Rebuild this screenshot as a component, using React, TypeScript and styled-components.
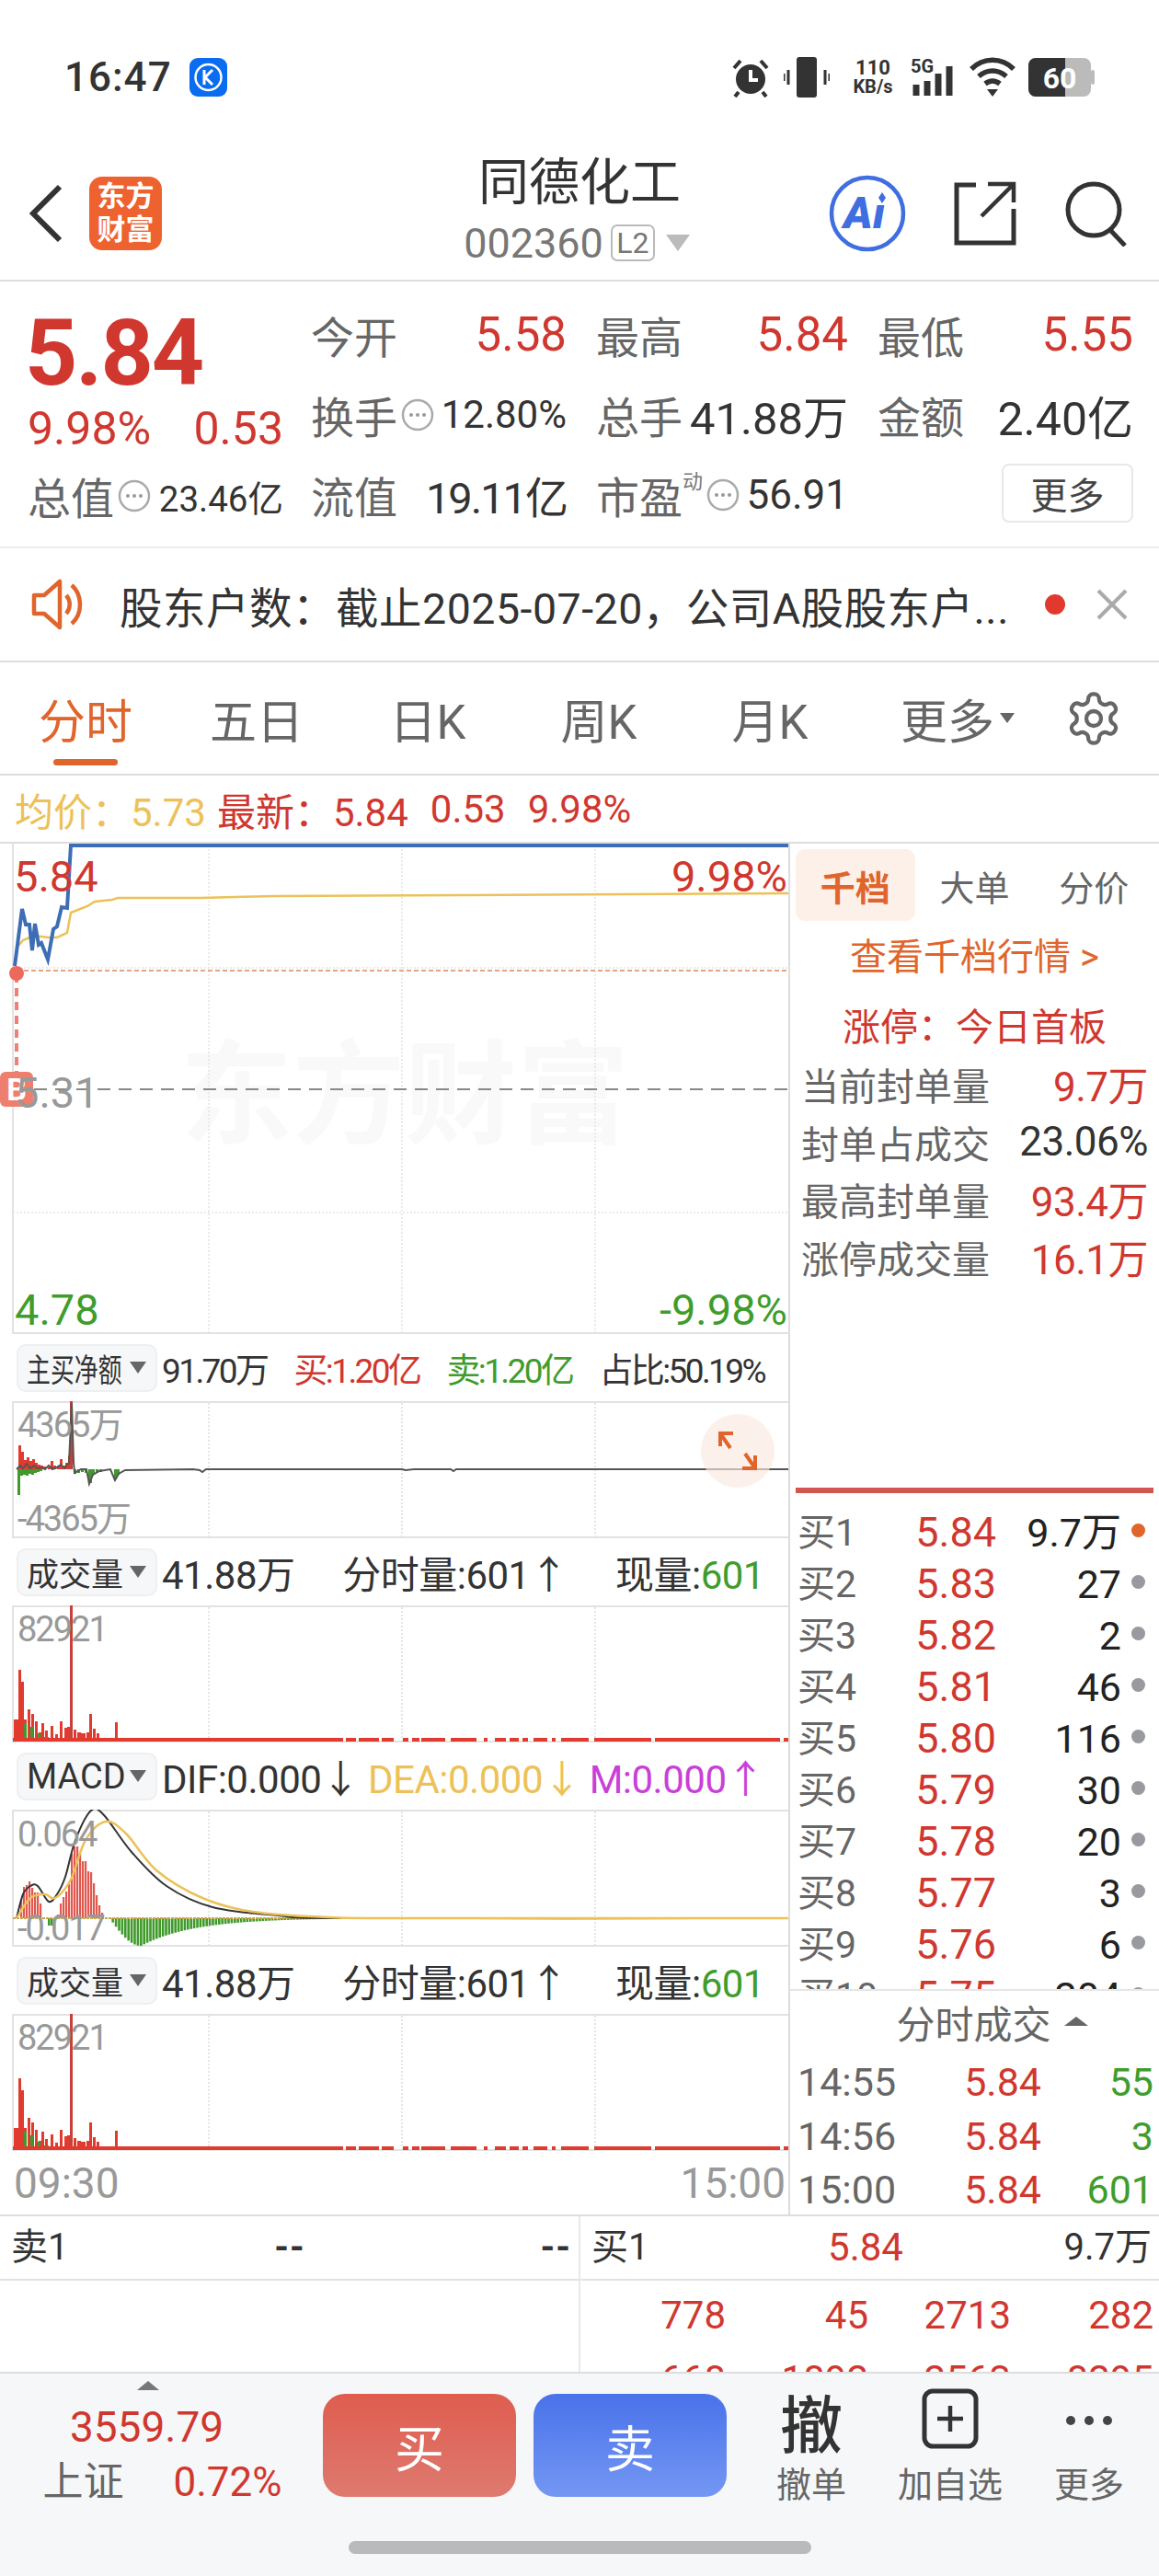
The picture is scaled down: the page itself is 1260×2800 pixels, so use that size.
import * as React from 'react';
import styled, { createGlobalStyle } from 'styled-components';

const RED = '#d0372f';
const GREEN = '#409c2c';
const YELLOW = '#ecc158';
const ORANGE = '#e0652c';
const LINE = '#e2e2e2';

const GlobalStyle = createGlobalStyle`
  html, body {
    margin: 0;
    padding: 0;
    background: #fff;
  }
  body {
    font-family: Roboto, "Noto Sans CJK SC", sans-serif;
    color: #333;
  }
`;

const Page = styled.div`
  width: 1260px;
  height: 2800px;
  overflow: hidden;
  display: flex;
  flex-direction: column;
  background: #fff;
`;

const StatusBar = styled.div`
  height: 160px;
  flex: none;
  display: flex;
  align-items: center;
  padding: 8px 70px 0 70px;
  box-sizing: border-box;
`;

const Clock = styled.span`
  font-size: 44px;
  font-weight: 500;
  color: #333;
  letter-spacing: 1px;
`;

const StatusIcons = styled.div`
  margin-left: auto;
  display: flex;
  align-items: center;
  gap: 14px;
`;

const NetSpeed = styled.div`
  display: flex;
  flex-direction: column;
  align-items: center;
  font-size: 20px;
  line-height: 21px;
  font-weight: 700;
  color: #333;
  width: 54px;
`;

const Header = styled.div`
  height: 146px;
  flex: none;
  display: grid;
  grid-template-columns: 1fr 400px 1fr;
  align-items: center;
  border-bottom: 2px solid #ddd;
  box-sizing: border-box;
`;

const HeaderLeft = styled.div`
  display: flex;
  align-items: center;
  padding-left: 32px;
  gap: 29px;
`;

const Logo = styled.div`
  width: 79px;
  height: 80px;
  border-radius: 14px;
  background: #ee6230;
  color: #fff;
  font-size: 31px;
  line-height: 36px;
  font-weight: 700;
  text-align: center;
  display: flex;
  align-items: center;
  justify-content: center;
`;

const HeaderCenter = styled.div`
  display: flex;
  flex-direction: column;
  align-items: center;
  padding-bottom: 15px;
`;

const Title = styled.div`
  font-size: 55px;
  line-height: 72px;
  color: #333;
`;

const CodeRow = styled.div`
  display: flex;
  align-items: center;
  height: 46px;
  margin-top: 7px;
  color: #777;
  font-size: 45px;
  margin-left: -6px;
`;

const L2Badge = styled.span`
  margin-left: 8px;
  width: 48px;
  height: 40px;
  border: 2px solid #bbb;
  border-radius: 7px;
  box-sizing: border-box;
  font-size: 32px;
  display: flex;
  align-items: center;
  justify-content: center;
  color: #777;
`;

const DownTriangle = styled.span<{ $size: number; $color: string }>`
  display: inline-block;
  border-left: ${p => p.$size}px solid transparent;
  border-right: ${p => p.$size}px solid transparent;
  border-top: ${p => Math.round(p.$size * 1.4)}px solid ${p => p.$color};
`;

const HeaderRight = styled.div`
  display: flex;
  align-items: center;
  justify-content: flex-end;
  gap: 52px;
  padding-right: 33px;
`;

const Quote = styled.div`
  height: 290px;
  flex: none;
  display: flex;
  padding: 14px 28px 0 30px;
  border-bottom: 2px solid #eee;
  box-sizing: border-box;
`;

const QuoteLeft = styled.div`
  width: 278px;
  margin-right: 30px;
  flex: none;
  display: flex;
  flex-direction: column;
`;

const BigPrice = styled.div`
  height: 116px;
  margin: 5px 0 -4px -3px;
  display: flex;
  align-items: center;
  font-size: 100px;
  font-weight: 700;
  color: ${RED};
  letter-spacing: -2px;
`;

const ChangeRow = styled.div`
  height: 58px;
  display: flex;
  align-items: center;
  justify-content: space-between;
  font-size: 50px;
  color: ${RED};
`;

const StatGrid = styled.div`
  flex: 1;
  display: grid;
  grid-template-columns: 278px 274px 278px;
  grid-auto-rows: 87px;
  column-gap: 32px;
`;

const Stat = styled.div`
  display: flex;
  align-items: center;
  height: 87px;
`;

const StatLabel = styled.span`
  font-size: 47px;
  color: #666;
  white-space: nowrap;
`;

const StatValue = styled.span<{ $color?: string; $size?: number; $spacing?: number }>`
  margin-left: auto;
  font-size: ${p => p.$size || 50}px;
  letter-spacing: ${p => p.$spacing || 0}px;
  color: ${p => p.$color || '#333'};
  white-space: nowrap;
`;

const Sup = styled.sup`
  font-size: 22px;
  line-height: 0;
  color: #777;
  position: relative;
  top: -14px;
  vertical-align: top;
`;

const MoreButton = styled.div`
  margin-left: auto;
  width: 143px;
  height: 64px;
  margin-top: -3px;
  border: 2px solid #e8e8e8;
  border-radius: 8px;
  box-sizing: border-box;
  font-size: 40px;
  color: #444;
  display: flex;
  align-items: center;
  justify-content: center;
`;

const Notice = styled.div`
  height: 124px;
  flex: none;
  display: flex;
  align-items: center;
  padding: 0 34px;
  border-bottom: 2px solid #ddd;
  box-sizing: border-box;
`;

const NoticeText = styled.div`
  margin-left: 36px;
  width: 990px;
  font-size: 46.5px;
  letter-spacing: 0.5px;
  color: #333;
  white-space: nowrap;
  overflow: hidden;
`;

const RedDot = styled.span`
  margin-left: 26px;
  width: 22px;
  height: 22px;
  border-radius: 50%;
  background: #e2392f;
  flex: none;
`;

const Tabs = styled.div`
  height: 123px;
  flex: none;
  display: flex;
  align-items: center;
  border-bottom: 2px solid #ddd;
  box-sizing: border-box;
  position: relative;
`;

const Tab = styled.div<{ $width: number; $active?: boolean }>`
  width: ${p => p.$width}px;
  height: 100%;
  flex: none;
  display: flex;
  align-items: center;
  justify-content: center;
  gap: 6px;
  font-size: 51px;
  color: ${p => (p.$active ? ORANGE : '#666')};
  position: relative;
  ${p =>
    p.$active
      ? `&::after {
    content: '';
    position: absolute;
    left: 58px;
    bottom: 9px;
    width: 70px;
    height: 7px;
    border-radius: 4px;
    background: ${ORANGE};
  }`
      : ''}
`;

const Body = styled.div`
  display: flex;
  height: 1492px;
  flex: none;
  border-bottom: 2px solid #ddd;
  box-sizing: border-box;
`;

const LeftCol = styled.div`
  width: 857px;
  flex: none;
  display: flex;
  flex-direction: column;
`;

const RightCol = styled.div`
  width: 403px;
  flex: none;
  display: flex;
  flex-direction: column;
  border-left: 2px solid #ddd;
  box-sizing: border-box;
`;

const InfoLine = styled.div`
  width: 1260px;
  height: 74px;
  flex: none;
  display: flex;
  align-items: center;
  gap: 24px;
  padding-left: 16px;
  font-size: 42px;
  color: ${RED};
  border-bottom: 2px solid #ddd;
  box-sizing: border-box;
`;

const Chunk = styled.span<{ $color?: string }>`
  color: ${p => p.$color || 'inherit'};
  white-space: nowrap;
`;

const ChartBox = styled.div<{ $height: number }>`
  position: relative;
  height: ${p => p.$height}px;
  flex: none;
  overflow: hidden;
  > svg {
    display: block;
    position: absolute;
    left: 0;
    top: 0;
  }
`;

const AxisLabel = styled.span<{ $y: number; $x?: number; $right?: number; $color?: string; $small?: boolean }>`
  position: absolute;
  top: ${p => p.$y}px;
  ${p => (p.$right !== undefined ? `right: ${p.$right}px;` : `left: ${p.$x}px;`)}
  transform: translateY(-50%);
  font-size: ${p => (p.$small ? 38 : 47)}px;
  letter-spacing: ${p => (p.$small ? '-2px' : '0')};
  line-height: 1;
  color: ${p => p.$color || '#999'};
  white-space: nowrap;
  z-index: 1;
`;

const Watermark = styled.span`
  position: absolute;
  left: 196px;
  top: 183px;
  font-size: 122px;
  line-height: 1.5;
  font-weight: 700;
  color: #f9f9f9;
  white-space: nowrap;
`;

const BuyBadge = styled.span`
  position: absolute;
  left: 0;
  top: 248px;
  width: 36px;
  height: 38px;
  border-radius: 6px;
  background: #ee7f6e;
  color: #fff;
  font-size: 34px;
  font-weight: 700;
  line-height: 38px;
  text-align: center;
`;

const SubHeader = styled.div`
  height: 73px;
  flex: none;
  display: flex;
  align-items: center;
  padding: 0 26px 0 18px;
  box-sizing: border-box;
`;

const Select = styled.div<{ $size: number }>`
  width: 153px;
  height: 52px;
  flex: none;
  display: flex;
  align-items: center;
  justify-content: space-between;
  padding: 0 10px 0 9px;
  margin-right: 5px;
  box-sizing: border-box;
  background: #f6f7f9;
  border: 2px solid #eeeff1;
  border-radius: 10px;
  font-size: ${p => p.$size}px;
  color: #333;
  white-space: nowrap;
`;

const NarrowLabel = styled.span`
  display: inline-block;
  width: 104px;
  transform: scaleX(0.74);
  transform-origin: left center;
`;

const SubValues = styled.div<{ $tight?: boolean }>`
  flex: 1;
  display: flex;
  justify-content: space-between;
  font-size: ${p => (p.$tight ? 37 : 42)}px;
  letter-spacing: ${p => (p.$tight ? '-2.6px' : '-0.5px')};
  color: #333;
  white-space: nowrap;
`;

const ExpandBubble = styled.div`
  position: absolute;
  left: 762px;
  top: 14px;
  width: 80px;
  height: 80px;
  border-radius: 50%;
  background: rgba(250, 232, 222, 0.65);
  display: flex;
  align-items: center;
  justify-content: center;
`;

const TimeAxis = styled.div`
  height: 70px;
  flex: none;
  display: flex;
  align-items: center;
  justify-content: space-between;
  padding: 0 3px 0 15px;
  font-size: 46px;
  color: #999;
  box-sizing: border-box;
`;

const DepthTop = styled.div`
  height: 706px;
  flex: none;
  padding: 6px 6px 0 6px;
  box-sizing: border-box;
  display: flex;
  flex-direction: column;
`;

const DepthTabs = styled.div`
  display: flex;
  height: 78px;
  flex: none;
`;

const DepthTab = styled.div<{ $active?: boolean }>`
  width: 130px;
  display: flex;
  align-items: center;
  justify-content: center;
  font-size: 38px;
  border-radius: 10px;
  color: ${p => (p.$active ? ORANGE : '#666')};
  font-weight: ${p => (p.$active ? 700 : 400)};
  background: ${p => (p.$active ? '#fdf0e8' : 'transparent')};
`;

const DepthLink = styled.div`
  height: 72px;
  display: flex;
  align-items: center;
  justify-content: center;
  font-size: 40px;
  color: ${ORANGE};
  flex: none;
`;

const LimitTitle = styled.div`
  height: 68px;
  margin-top: 6px;
  display: flex;
  align-items: center;
  justify-content: center;
  font-size: 41px;
  color: ${RED};
  flex: none;
`;

const SealRow = styled.div`
  height: 62.5px;
  flex: none;
  display: flex;
  align-items: center;
  justify-content: space-between;
  padding: 0 6px 0 6px;
  font-size: 41px;
  white-space: nowrap;
  color: #666;
`;

const SealValue = styled.span<{ $color: string }>`
  color: ${p => p.$color};
  font-size: 44px;
  letter-spacing: -0.5px;
`;

const RedRule = styled.div`
  height: 6px;
  flex: none;
  margin: 220px 0 0 0;
  background: #d2564f;
`;

const BookList = styled.div`
  flex: 1;
  overflow: hidden;
  padding-top: 15px;
  min-height: 0;
`;

const BookRow = styled.div`
  height: 56px;
  line-height: 56px;
  display: grid;
  grid-template-columns: 80px 136px 136px 1fr;
  align-items: center;
  padding-left: 8px;
  white-space: nowrap;
  font-size: 45px;
`;

const BookLabel = styled.span`
  color: #666;
  font-size: 41px;
`;

const BookPrice = styled.span`
  color: ${RED};
  text-align: right;
`;

const BookVol = styled.span`
  color: #222;
  font-size: 43px;
  text-align: right;
`;

const BookDot = styled.span<{ $color: string }>`
  justify-self: center;
  width: 15px;
  height: 15px;
  border-radius: 50%;
  background: ${p => p.$color};
  margin-left: -4px;
  margin-top: -5px;
`;

const TradesPanel = styled.div`
  height: 245px;
  flex: none;
  border-top: 2px solid #e6e6e6;
  box-sizing: border-box;
  background: #fff;
`;

const TradesTitle = styled.div`
  height: 66px;
  margin-bottom: 4px;
  display: flex;
  align-items: center;
  justify-content: center;
  gap: 14px;
  padding-left: 38px;
  font-size: 42px;
  color: #666;
`;

const UpTriangle = styled.span<{ $size: number; $color: string; $shift?: number }>`
  display: inline-block;
  margin-right: ${p => p.$shift || 0}px;
  border-left: ${p => p.$size}px solid transparent;
  border-right: ${p => p.$size}px solid transparent;
  border-bottom: ${p => Math.round(p.$size * 0.8)}px solid ${p => p.$color};
`;

const TradeRow = styled.div`
  height: 58.5px;
  display: grid;
  grid-template-columns: 128px 137px 1fr;
  align-items: center;
  padding: 0 6px 0 8px;
  font-size: 43px;
`;

const TradeTime = styled.span`
  color: #666;
`;

const TradeNum = styled.span<{ $color: string }>`
  color: ${p => p.$color};
  text-align: right;
`;

const Ledger = styled.div`
  flex: 1;
  min-height: 0;
  overflow: hidden;
  display: flex;
`;

const LedgerSide = styled.div<{ $right?: boolean }>`
  width: ${p => (p.$right ? 629 : 631)}px;
  flex: none;
  box-sizing: border-box;
  border-right: ${p => (p.$right ? '0' : '2px solid #e8e8e8')};
`;

const LedgerHead = styled.div`
  height: 70px;
  line-height: 70px;
  display: flex;
  align-items: center;
  justify-content: space-between;
  padding: 0 8px 0 12px;
  font-size: 40px;
  color: #333;
  border-bottom: 2px solid #e2e2e2;
  box-sizing: border-box;
`;

const LedgerPrice = styled.span`
  color: ${RED};
  font-size: 42px;
  margin-left: 20px;
`;

const LedgerDash = styled.span<{ $middle?: boolean }>`
  font-size: 40px;
  font-weight: 700;
  letter-spacing: 1px;
  margin-right: ${p => (p.$middle ? 32 : 0)}px;
`;

const LedgerGrid = styled.div`
  display: grid;
  grid-template-columns: 158px 155px 155px 155px;
  grid-auto-rows: 70px;
  align-items: center;
  font-size: 42px;
  color: ${RED};
  text-align: right;
  padding-top: 2px;
`;

const BottomBar = styled.div`
  height: 222px;
  flex: none;
  display: flex;
  flex-direction: column;
  background: #f6f7f9;
  border-top: 2px solid #ddd;
  box-sizing: border-box;
  position: relative;
`;

const BottomMain = styled.div`
  display: flex;
  height: 150px;
  flex: none;
`;

const IndexBlock = styled.div`
  width: 351px;
  flex: none;
  display: flex;
  flex-direction: column;
  align-items: center;
  padding-top: 8px;
  box-sizing: border-box;
`;

const IndexValue = styled.div`
  font-size: 46px;
  line-height: 64px;
  margin: 8px 32px 0 0;
  color: ${RED};
`;

const IndexLine = styled.div`
  width: 260px;
  display: flex;
  justify-content: space-between;
  align-items: center;
  font-size: 44px;
  line-height: 56px;
  margin-left: 2px;
  color: ${RED};
`;

const TradeButton = styled.div<{ $from: string; $to: string }>`
  width: 210px;
  height: 112px;
  margin: 22px 19px 0 0;
  flex: none;
  border-radius: 24px;
  background: linear-gradient(${p => p.$from}, ${p => p.$to});
  color: #fff;
  font-size: 54px;
  display: flex;
  align-items: center;
  justify-content: center;
`;

const Action = styled.div<{ $width: number }>`
  width: ${p => p.$width}px;
  flex: none;
  display: flex;
  flex-direction: column;
  align-items: center;
  font-size: 38px;
  color: #666;
`;

const ActionIcon = styled.div`
  height: 94px;
  display: flex;
  align-items: center;
  justify-content: center;
  font-size: 68px;
  font-weight: 500;
  color: #333;
  margin-top: 4px;
`;

const ActionLabel = styled.div`
  line-height: 46px;
`;

const HomeBar = styled.div`
  width: 503px;
  height: 14px;
  margin: 32px auto 0;
  border-radius: 7px;
  background: #b9babc;
`;

const InfoDot = () => (
  <svg width="36" height="36" viewBox="0 0 36 36" style={{ marginLeft: 4, flex: 'none' }}>
    <circle cx="18" cy="18" r="16" fill="none" stroke="#aaa" strokeWidth="2.5" />
    <circle cx="11" cy="18" r="2" fill="#999" />
    <circle cx="18" cy="18" r="2" fill="#999" />
    <circle cx="25" cy="18" r="2" fill="#999" />
  </svg>
);

const Frame = ({ height }: { height: number }) => (
  <g>
    <rect x="14" y="1" width="845" height={height - 2} fill="none" stroke={LINE} strokeWidth="2" />
    {[227, 437, 647].map(x => (
      <line key={x} x1={x} x2={x} y1="2" y2={height - 2} stroke="#ddd" strokeWidth="1.5" strokeDasharray="2 2" />
    ))}
  </g>
);

const bars = (list: number[][], base: number, color: string, down = false) =>
  list.map(([x, w, h], i) => (
    <rect key={i} x={x} y={down ? base : base - h} width={w} height={h} fill={color} />
  ));

const smooth = (pts: number[][]) => {
  let d = `M${pts[0][0]} ${pts[0][1]}`;
  for (let i = 0; i < pts.length - 1; i++) {
    const p0 = pts[i - 1] || pts[i];
    const p1 = pts[i];
    const p2 = pts[i + 1];
    const p3 = pts[i + 2] || p2;
    const c1x = p1[0] + (p2[0] - p0[0]) / 6;
    const c1y = p1[1] + (p2[1] - p0[1]) / 6;
    const c2x = p2[0] - (p3[0] - p1[0]) / 6;
    const c2y = p2[1] - (p3[1] - p1[1]) / 6;
    d += ` C${c1x} ${c1y} ${c2x} ${c2y} ${p2[0]} ${p2[1]}`;
  }
  return d;
};

const PRICE_LINE =
  '16,133 24,71 28,88 32,88 35,116 38,87 42,110 45,108 52,126 58,93 62,90 67,69 73,70 77,2 857,2';
const AVG_LINE =
  '20,111 25,105 37,100 53,102 62,102 73,97 77,75 95,68 103,63 122,61 128,59 217,59 300,57 500,56 857,54';

const MainChart = () => (
  <svg width="857" height="533" viewBox="0 0 857 533">
    <line x1="14" x2="14" y1="0" y2="533" stroke={LINE} strokeWidth="2" />
    <line x1="14" x2="857" y1="532" y2="532" stroke={LINE} strokeWidth="2" />
    {[227, 437, 647].map(x => (
      <line key={x} x1={x} x2={x} y1="2" y2="531" stroke="#e4e4e4" strokeWidth="1.5" strokeDasharray="2 2" />
    ))}
    <line x1="14" x2="857" y1="401" y2="401" stroke="#e4e4e4" strokeWidth="1.5" strokeDasharray="2 2" />
    <line x1="18" x2="857" y1="135" y2="135" stroke="#e4e4e4" strokeWidth="1.5" strokeDasharray="2 2" />
    <line x1="18" x2="857" y1="138" y2="138" stroke="#e6a582" strokeWidth="2" strokeDasharray="5 3" />
    <line x1="14" x2="857" y1="267" y2="267" stroke="#888" strokeWidth="2" strokeDasharray="14 9" />
    <line x1="18" x2="18" y1="142" y2="250" stroke="#ee8078" strokeWidth="4" strokeDasharray="9 6" />
    <polyline points={AVG_LINE} fill="none" stroke={YELLOW} strokeWidth="2.5" />
    <polyline points={PRICE_LINE} fill="none" stroke="#3d6db5" strokeWidth="4" />
    <circle cx="18" cy="141" r="8" fill="#ec6a5c" />
  </svg>
);

const FLOW_RED = [
  [20, 3, 26], [23, 3, 19], [26, 3, 10], [29, 3, 13], [32, 3, 9], [35, 3, 11], [38, 3, 7], [41, 3, 5],
  [44, 3, 4], [47, 3, 3], [52, 3, 2], [55, 3, 9], [58, 3, 4], [62, 3, 4], [65, 3, 11], [68, 3, 4],
  [71, 3, 7], [74, 3, 15], [76, 3, 74],
];
const FLOW_GREEN = [
  [19, 3, 28], [22, 3, 7], [25, 3, 6], [28, 3, 7], [31, 3, 5], [34, 3, 6], [37, 3, 4], [40, 3, 3],
  [43, 3, 2], [80, 3, 5], [84, 3, 4], [88, 3, 3], [92, 3, 4], [96, 4, 15], [100, 3, 6], [104, 3, 4],
  [108, 3, 3], [124, 3, 11], [127, 3, 6],
];

const FlowChart = () => (
  <svg width="857" height="149" viewBox="0 0 857 149">
    <Frame height={149} />
    {bars(FLOW_RED, 74, '#e13a2e')}
    {bars(FLOW_GREEN, 74, '#3f9a2b', true)}
    <rect x="76" y="0" width="3" height="74" fill="#c8403a" />
    <polyline
      points="18,74 22,70 25,73 29,68 33,73 37,70 41,73 45,72 49,74 53,70 57,74 62,72 66,69 70,73 75,67 78,2 80,66 81,78 88,74 94,74 97,90 101,80 108,76 120,74 125,86 129,79 136,75 210,74 217,75 220,77 224,74 437,74 441,75 450,74 490,74 493,76 496,74 857,74"
      fill="none"
      stroke="#555"
      strokeWidth="2"
    />
  </svg>
);

const VOL_RED = [
  [15, 6, 24], [20, 3, 78], [23, 3, 65], [26, 3, 24], [30, 3, 35], [34, 3, 30], [38, 3, 22], [42, 3, 10],
  [45, 3, 20], [49, 3, 12], [55, 3, 17], [60, 3, 8], [65, 3, 22], [70, 3, 15], [73, 3, 16], [76, 3, 147],
  [80, 3, 13], [84, 4, 10], [88, 5, 9], [94, 3, 10], [97, 3, 30], [101, 3, 14], [105, 3, 9], [125, 3, 21],
];
const VOL_GREEN = [
  [26, 3, 20], [33, 3, 16], [41, 3, 9], [48, 5, 5],
];
const BAND = [
  [14, 373], [376, 387], [390, 412], [415, 428], [438, 444], [448, 456], [458, 484], [490, 518],
  [526, 526], [538, 550], [554, 564], [568, 574], [580, 595], [600, 604], [610, 640], [646, 708], [712, 848],
  [852, 857],
];

const VolumeChart = () => (
  <svg width="857" height="149" viewBox="0 0 857 149">
    <Frame height={149} />
    {bars(VOL_RED, 148, '#e13a2e')}
    {bars(VOL_GREEN, 148, '#3f9a2b')}
    <rect x="76" y="0" width="3" height="148" fill="#c8403a" />
    {BAND.map(([a, b]) => (
      <rect key={a} x={a} y="144" width={Math.max(b - a, 4)} height="4" fill="#e13a2e" />
    ))}
  </svg>
);

const macdRed: number[][] = [];
[
  [22, 20], [25, 34], [28, 36], [31, 40], [34, 33], [37, 28], [40, 28], [43, 16],
  [62, 4], [65, 16], [68, 23], [71, 29], [74, 37], [77, 70], [80, 78], [83, 78], [86, 70], [89, 62],
  [92, 62], [95, 51], [98, 50], [101, 38], [104, 25], [107, 14], [110, 6],
].forEach(([x, h]) => macdRed.push([x, 2.2, h]));

const macdGreen: number[][] = [[52, 2.6, 8], [55, 2.6, 8]];
for (let x = 118; x < 350; x += 3.4) {
  const depth = x < 152 ? 30 * Math.sin(((x - 118) / 34) * (Math.PI / 2)) : 30 * Math.exp(-(x - 152) / 58);
  macdGreen.push([x, 2.6, depth]);
}

const DIF_LINE = [
  [18, 118], [25, 92], [33, 83], [41, 83], [53, 100], [62, 92], [71, 73], [82, 33], [99, 1], [113, 6],
  [143, 46], [181, 83], [231, 106], [302, 115], [385, 118], [857, 118],
];
const DEA_LINE = [
  [18, 118], [33, 96], [49, 92], [60, 96], [77, 76], [93, 33], [115, 13], [137, 26], [170, 66],
  [220, 96], [275, 111], [357, 117], [440, 118], [857, 118],
];

const MacdChart = () => (
  <svg width="857" height="149" viewBox="0 0 857 149">
    <Frame height={149} />
    {bars(macdRed, 118, '#e0584e')}
    {bars(macdGreen, 118, '#3f9a2b', true)}
    <line x1="14" x2="857" y1="118" y2="118" stroke="#c9a94a" strokeWidth="2" strokeDasharray="3 1" />
    <path d={smooth(DIF_LINE)} fill="none" stroke="#333" strokeWidth="2" />
    <path d={smooth(DEA_LINE)} fill="none" stroke={YELLOW} strokeWidth="2.5" />
  </svg>
);

const CaretDown = () => <DownTriangle $size={9} $color="#666" />;

const VolumeHeader = () => (
  <SubHeader>
    <Select $size={35}>
      成交量
      <CaretDown />
    </Select>
    <SubValues>
      <span>41.88万</span>
      <span>分时量:601↑</span>
      <span>
        现量:<Chunk $color={GREEN}>601</Chunk>
      </span>
    </SubValues>
  </SubHeader>
);

const BOOK = [
  ['买1', '5.84', '9.7万', ORANGE],
  ['买2', '5.83', '27'],
  ['买3', '5.82', '2'],
  ['买4', '5.81', '46'],
  ['买5', '5.80', '116'],
  ['买6', '5.79', '30'],
  ['买7', '5.78', '20'],
  ['买8', '5.77', '3'],
  ['买9', '5.76', '6'],
  ['买10', '5.75', '204'],
];

const TRADES = [
  ['14:55', '5.84', '55'],
  ['14:56', '5.84', '3'],
  ['15:00', '5.84', '601'],
];

const SEAL = [
  ['当前封单量', '9.7万', RED],
  ['封单占成交', '23.06%', '#333'],
  ['最高封单量', '93.4万', RED],
  ['涨停成交量', '16.1万', RED],
];

const StatusGlyphs = () => (
  <StatusIcons>
    <svg width="44" height="44" viewBox="0 0 42 44">
      <circle cx="21" cy="24" r="16" fill="#333" />
      <path d="M21 14v11h8" fill="none" stroke="#fff" strokeWidth="4" />
      <path d="M3 12 10 4M39 12 32 4M8 38l-4 5M34 38l4 5" stroke="#333" strokeWidth="4" />
    </svg>
    <svg width="50" height="44" viewBox="0 0 50 44" style={{ marginRight: 6 }}>
      <rect x="14" y="0" width="22" height="44" rx="3" fill="#333" />
      <path d="M5 14v16M0 18v8M45 14v16M50 18v8" stroke="#333" strokeWidth="3" />
    </svg>
    <NetSpeed>
      <span style={{ fontSize: 22 }}>110</span>
      <span>KB/s</span>
    </NetSpeed>
    <svg width="50" height="44" viewBox="0 0 50 44">
      <text x="0" y="17" fontSize="20" fontWeight="700" fill="#333" fontFamily="Roboto">5G</text>
      <path d="M6 30v12M18 26v16M30 18v24M42 10v32" stroke="#333" strokeWidth="7" />
    </svg>
    <svg width="50" height="44" viewBox="0 0 50 44">
      <path d="M2 13C15 0 35 0 48 13M10 21c9-8 21-8 30 0M17 29c5-4 11-4 16 0" fill="none" stroke="#333" strokeWidth="5.5" />
      <path d="M19 35h12l-6 8z" fill="#333" />
    </svg>
    <svg width="72" height="42" viewBox="0 0 72 42">
      <rect x="0" y="0" width="68" height="42" rx="8" fill="#bbb" />
      <path d="M8 0h32v42H8a8 8 0 0 1-8-8V8a8 8 0 0 1 8-8z" fill="#333" />
      <rect x="68" y="13" width="4" height="16" rx="2" fill="#bbb" />
      <text x="34" y="33" textAnchor="middle" fontSize="32" fontWeight="700" fill="#fff" fontFamily="Roboto">60</text>
    </svg>
  </StatusIcons>
);

export default function App() {
  return (
    <Page>
      <GlobalStyle />
      <StatusBar>
        <Clock>16:47</Clock>
        <svg width="41" height="42" viewBox="0 0 41 42" style={{ marginLeft: 19 }}>
          <rect width="41" height="42" rx="9" fill="#0a6cf0" />
          <circle cx="20.5" cy="21" r="14" fill="none" stroke="#fff" strokeWidth="2.5" />
          <path d="M16 13v16M25 13l-8 8 8 8" fill="none" stroke="#fff" strokeWidth="3" />
        </svg>
        <StatusGlyphs />
      </StatusBar>

      <Header>
        <HeaderLeft>
          <svg width="36" height="64" viewBox="0 0 36 64">
            <path d="M33 3 4 32l29 29" fill="none" stroke="#333" strokeWidth="6" />
          </svg>
          <Logo>
            东方
            <br />
            财富
          </Logo>
        </HeaderLeft>
        <HeaderCenter>
          <Title>同德化工</Title>
          <CodeRow>
            002360
            <L2Badge>L2</L2Badge>
            <span style={{ width: 12 }} />
            <DownTriangle $size={13} $color="#bbb" />
          </CodeRow>
        </HeaderCenter>
        <HeaderRight>
          <svg width="84" height="84" viewBox="0 0 84 84">
            <circle cx="42" cy="42" r="39" fill="none" stroke="#3f6ee0" strokeWidth="4.5" />
            <text x="16" y="58" fontSize="48" fontWeight="900" fontStyle="italic" fill="#3f6ee0" fontFamily="Roboto">
              Aı
            </text>
            <path d="M58 19l4 6-4 6-4-6z" fill="#3f6ee0" />
          </svg>
          <svg width="68" height="70" viewBox="0 0 68 70">
            <path d="M24 4H3v63h62V30" fill="none" stroke="#333" strokeWidth="5" />
            <path d="M37 3h28v20M65 3 30 38" fill="none" stroke="#333" strokeWidth="4.5" />
          </svg>
          <svg width="70" height="72" viewBox="0 0 70 72">
            <circle cx="32" cy="32" r="28" fill="none" stroke="#333" strokeWidth="5" />
            <path d="m50 54 16 17" stroke="#333" strokeWidth="5" />
          </svg>
        </HeaderRight>
      </Header>

      <Quote>
        <QuoteLeft>
          <BigPrice>5.84</BigPrice>
          <ChangeRow>
            <span>9.98%</span>
            <span>0.53</span>
          </ChangeRow>
          <Stat>
            <StatLabel>总值</StatLabel>
            <InfoDot />
            <StatValue $size={38.5}>23.46亿</StatValue>
          </Stat>
        </QuoteLeft>
        <StatGrid>
          <Stat>
            <StatLabel>今开</StatLabel>
            <StatValue $color={RED} $size={51}>5.58</StatValue>
          </Stat>
          <Stat>
            <StatLabel>最高</StatLabel>
            <StatValue $color={RED} $size={51}>5.84</StatValue>
          </Stat>
          <Stat>
            <StatLabel>最低</StatLabel>
            <StatValue $color={RED} $size={51}>5.55</StatValue>
          </Stat>
          <Stat>
            <StatLabel>换手</StatLabel>
            <InfoDot />
            <StatValue $size={42}>12.80%</StatValue>
          </Stat>
          <Stat>
            <StatLabel>总手</StatLabel>
            <StatValue $size={49}>41.88万</StatValue>
          </Stat>
          <Stat>
            <StatLabel>金额</StatLabel>
            <StatValue>2.40亿</StatValue>
          </Stat>
          <Stat>
            <StatLabel>流值</StatLabel>
            <StatValue $size={47} $spacing={-2}>19.11亿</StatValue>
          </Stat>
          <Stat>
            <StatLabel>市盈</StatLabel>
            <Sup>动</Sup>
            <InfoDot />
            <StatValue $size={44}>56.91</StatValue>
          </Stat>
          <Stat>
            <MoreButton>更多</MoreButton>
          </Stat>
        </StatGrid>
      </Quote>

      <Notice>
        <svg width="60" height="58" viewBox="0 0 60 58" style={{ flex: 'none' }}>
          <path d="M3 19h11L31 4v50L14 39H3z" fill="none" stroke={ORANGE} strokeWidth="4.5" strokeLinejoin="round" />
          <path d="M38 19c5 6 5 14 0 20M44 8c12 11 12 31 0 42" fill="none" stroke={ORANGE} strokeWidth="4.5" />
        </svg>
        <NoticeText>股东户数：截止2025-07-20，公司A股股东户...</NoticeText>
        <RedDot />
        <svg width="34" height="34" viewBox="0 0 34 34" style={{ marginLeft: 34, flex: 'none' }}>
          <path d="M2 2l30 30M32 2 2 32" stroke="#aaa" strokeWidth="4" />
        </svg>
      </Notice>

      <Tabs>
        <Tab $width={186} $active>
          分时
        </Tab>
        <Tab $width={186}>五日</Tab>
        <Tab $width={186}>日K</Tab>
        <Tab $width={186}>周K</Tab>
        <Tab $width={186}>月K</Tab>
        <Tab $width={222}>
          更多
          <DownTriangle $size={8} $color="#666" />
        </Tab>
        <svg width="64" height="64" viewBox="0 0 24 24" fill="none" stroke="#666" strokeWidth="1.6" style={{ marginLeft: 5 }}>
          <path d="M12.22 2h-.44a2 2 0 0 0-2 2v.18a2 2 0 0 1-1 1.73l-.43.25a2 2 0 0 1-2 0l-.15-.08a2 2 0 0 0-2.73.73l-.22.38a2 2 0 0 0 .73 2.73l.15.1a2 2 0 0 1 1 1.72v.51a2 2 0 0 1-1 1.74l-.15.09a2 2 0 0 0-.73 2.73l.22.38a2 2 0 0 0 2.73.73l.15-.08a2 2 0 0 1 2 0l.43.25a2 2 0 0 1 1 1.73V20a2 2 0 0 0 2 2h.44a2 2 0 0 0 2-2v-.18a2 2 0 0 1 1-1.73l.43-.25a2 2 0 0 1 2 0l.15.08a2 2 0 0 0 2.73-.73l.22-.39a2 2 0 0 0-.73-2.73l-.15-.08a2 2 0 0 1-1-1.74v-.5a2 2 0 0 1 1-1.74l.15-.09a2 2 0 0 0 .73-2.73l-.22-.38a2 2 0 0 0-2.73-.73l-.15.08a2 2 0 0 1-2 0l-.43-.25a2 2 0 0 1-1-1.73V4a2 2 0 0 0-2-2z" />
          <circle cx="12" cy="12" r="3" />
        </svg>
      </Tabs>

      <InfoLine>
        <Chunk $color={YELLOW} style={{ marginRight: -12 }}>
          均价：5.73
        </Chunk>
        <Chunk>最新：5.84</Chunk>
        <Chunk>0.53</Chunk>
        <Chunk>9.98%</Chunk>
      </InfoLine>

      <Body>
        <LeftCol>
          <ChartBox $height={533}>
            <Watermark>东方财富</Watermark>
            <MainChart />
            <BuyBadge>B</BuyBadge>
            <AxisLabel $x={15} $y={35} $color={RED}>5.84</AxisLabel>
            <AxisLabel $right={1} $y={35} $color={RED}>9.98%</AxisLabel>
            <AxisLabel $x={16} $y={270}>5.31</AxisLabel>
            <AxisLabel $x={16} $y={506} $color={GREEN}>4.78</AxisLabel>
            <AxisLabel $right={1} $y={506} $color={GREEN}>-9.98%</AxisLabel>
          </ChartBox>

          <SubHeader>
            <Select $size={35}>
              <NarrowLabel>主买净额</NarrowLabel>
              <CaretDown />
            </Select>
            <SubValues $tight>
              <span>91.70万</span>
              <span style={{ color: RED }}>买:1.20亿</span>
              <span style={{ color: GREEN }}>卖:1.20亿</span>
              <span>占比:50.19%</span>
            </SubValues>
          </SubHeader>
          <ChartBox $height={149}>
            <AxisLabel $x={19} $y={26} $small>4365万</AxisLabel>
            <AxisLabel $x={19} $y={128} $small>-4365万</AxisLabel>
            <FlowChart />
            <ExpandBubble>
              <svg width="44" height="44" viewBox="0 0 44 44">
                <path d="M3 17V3h14M3 3l11 16M41 27v14H27M41 41 30 25" fill="none" stroke={ORANGE} strokeWidth="4" />
              </svg>
            </ExpandBubble>
          </ChartBox>

          <VolumeHeader />
          <ChartBox $height={149}>
            <AxisLabel $x={19} $y={26} $small>82921</AxisLabel>
            <VolumeChart />
          </ChartBox>

          <SubHeader>
            <Select $size={38}>
              MACD
              <CaretDown />
            </Select>
            <SubValues>
              <span>DIF:0.000↓</span>
              <Chunk $color={YELLOW}>DEA:0.000↓</Chunk>
              <Chunk $color="#c93fd9">M:0.000↑</Chunk>
            </SubValues>
          </SubHeader>
          <ChartBox $height={149}>
            <AxisLabel $x={19} $y={27} $small>0.064</AxisLabel>
            <AxisLabel $x={19} $y={129} $small>-0.017</AxisLabel>
            <MacdChart />
          </ChartBox>

          <VolumeHeader />
          <ChartBox $height={149}>
            <AxisLabel $x={19} $y={26} $small>82921</AxisLabel>
            <VolumeChart />
          </ChartBox>

          <TimeAxis>
            <span>09:30</span>
            <span>15:00</span>
          </TimeAxis>
        </LeftCol>

        <RightCol>
          <DepthTop>
            <DepthTabs>
              <DepthTab $active>千档</DepthTab>
              <DepthTab>大单</DepthTab>
              <DepthTab>分价</DepthTab>
            </DepthTabs>
            <DepthLink>查看千档行情 &gt;</DepthLink>
            <LimitTitle>涨停：今日首板</LimitTitle>
            {SEAL.map(([label, value, color]) => (
              <SealRow key={label}>
                {label}
                <SealValue $color={color}>{value}</SealValue>
              </SealRow>
            ))}
            <RedRule />
          </DepthTop>
          <BookList>
            {BOOK.map(([label, price, vol, dot]) => (
              <BookRow key={label}>
                <BookLabel>{label}</BookLabel>
                <BookPrice>{price}</BookPrice>
                <BookVol>{vol}</BookVol>
                <BookDot $color={dot || '#999aa0'} />
              </BookRow>
            ))}
          </BookList>
          <TradesPanel>
            <TradesTitle>
              分时成交
              <UpTriangle $size={13} $color="#666" />
            </TradesTitle>
            {TRADES.map(([time, price, vol]) => (
              <TradeRow key={time}>
                <TradeTime>{time}</TradeTime>
                <TradeNum $color={RED}>{price}</TradeNum>
                <TradeNum $color={GREEN}>{vol}</TradeNum>
              </TradeRow>
            ))}
          </TradesPanel>
        </RightCol>
      </Body>

      <Ledger>
        <LedgerSide>
          <LedgerHead>
            <span>卖1</span>
            <LedgerDash $middle>--</LedgerDash>
            <LedgerDash>--</LedgerDash>
          </LedgerHead>
        </LedgerSide>
        <LedgerSide $right>
          <LedgerHead>
            <span>买1</span>
            <LedgerPrice>5.84</LedgerPrice>
            <span>9.7万</span>
          </LedgerHead>
          <LedgerGrid>
            <span>778</span>
            <span>45</span>
            <span>2713</span>
            <span>282</span>
            <span>668</span>
            <span>1892</span>
            <span>2563</span>
            <span>8295</span>
          </LedgerGrid>
        </LedgerSide>
      </Ledger>

      <BottomBar>
        <BottomMain>
          <IndexBlock>
            <UpTriangle $size={12} $color="#777" $shift={30} />
            <IndexValue>3559.79</IndexValue>
            <IndexLine>
              <Chunk $color="#666">上证</Chunk>
              <span>0.72%</span>
            </IndexLine>
          </IndexBlock>
          <TradeButton $from="#df5d4f" $to="#de7a70">买</TradeButton>
          <TradeButton $from="#4a72ea" $to="#7497f3">卖</TradeButton>
          <Action $width={146}>
            <ActionIcon>撤</ActionIcon>
            <ActionLabel>撤单</ActionLabel>
          </Action>
          <Action $width={156}>
            <ActionIcon>
              <svg width="62" height="66" viewBox="0 0 62 66" style={{ marginTop: -4 }}>
                <rect x="3" y="3" width="56" height="60" rx="9" fill="none" stroke="#333" strokeWidth="5" />
                <path d="M31 19v28M17 33h28" stroke="#333" strokeWidth="4.5" />
              </svg>
            </ActionIcon>
            <ActionLabel>加自选</ActionLabel>
          </Action>
          <Action $width={146}>
            <ActionIcon>
              <svg width="54" height="14" viewBox="0 0 54 14">
                <circle cx="7" cy="7" r="5" fill="#444" />
                <circle cx="27" cy="7" r="5" fill="#444" />
                <circle cx="47" cy="7" r="5" fill="#444" />
              </svg>
            </ActionIcon>
            <ActionLabel>更多</ActionLabel>
          </Action>
        </BottomMain>
        <HomeBar />
      </BottomBar>
    </Page>
  );
}
